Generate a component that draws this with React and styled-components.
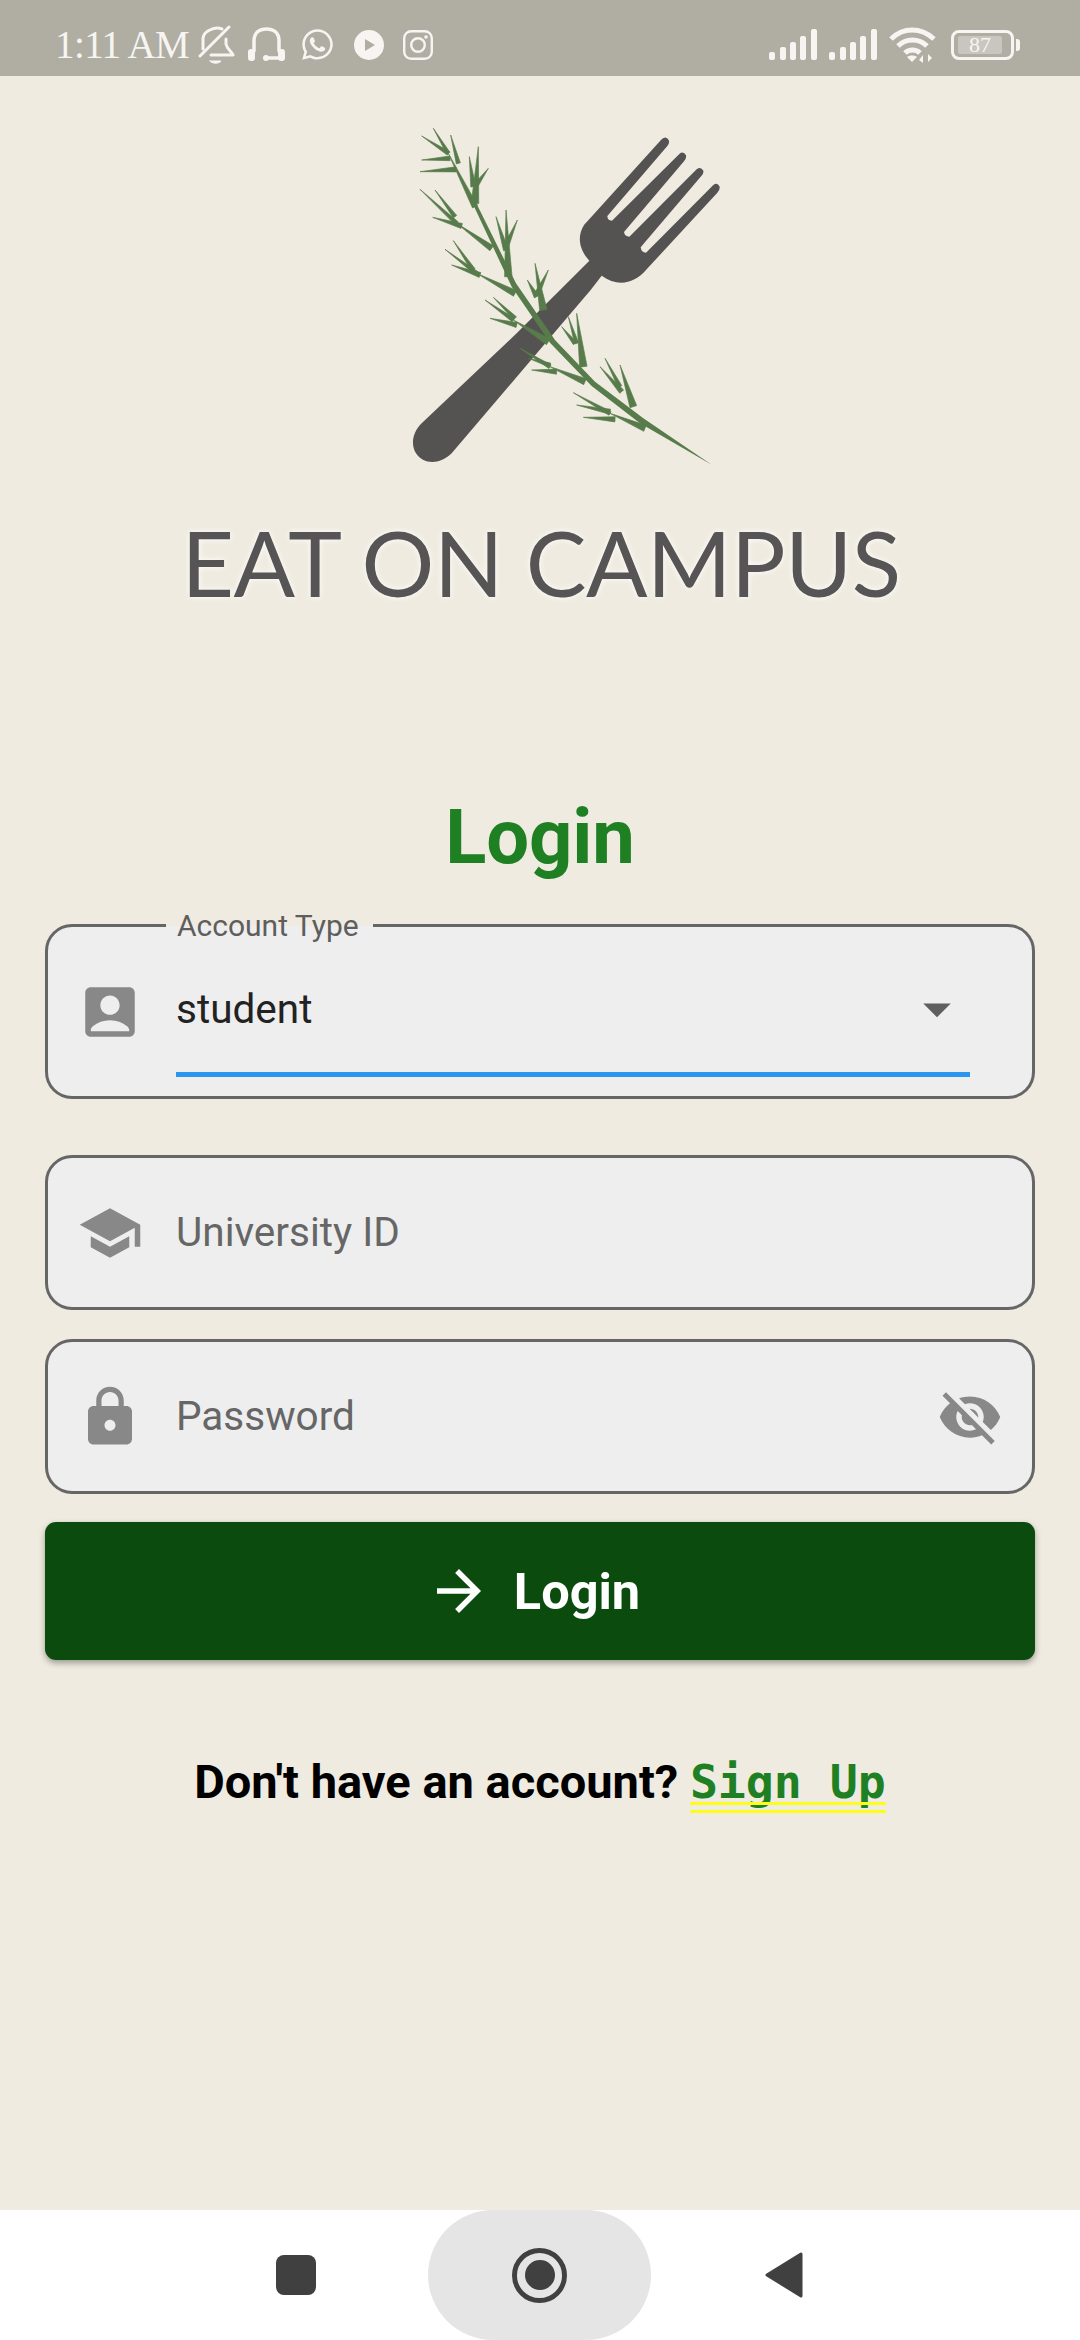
import React from "react";
import styled, { createGlobalStyle } from "styled-components";
import { MdAccountBox, MdSchool, MdLock, MdVisibilityOff, MdArrowForward, MdArrowDropDown } from "react-icons/md";
import { FaWhatsapp } from "react-icons/fa";

const Global = createGlobalStyle`
  html, body { margin: 0; padding: 0; background: #efebe0; }
  * { box-sizing: border-box; }
`;

const Page = styled.div`
  width: 1080px; height: 2340px; background: #efebe0; display: flex; flex-direction: column;
  overflow: hidden; font-family: Roboto, "Liberation Sans", sans-serif;
`;
const StatusBar = styled.div`
  height: 76px; flex: none; background: #b0ada3; display: flex; align-items: center; color: #f6f5f2;
  padding: 13px 0 0 55px;
`;
const Time = styled.span`
  font-family: "Liberation Serif", serif; font-size: 39px; letter-spacing: -0.6px; line-height: 1; width: 143px; white-space: nowrap;
`;
const StatusLeft = styled.div`display: flex; align-items: center; gap: 19px;`;
const StatusRight = styled.div`margin-left: auto; padding-right: 66px; display: flex; align-items: center; gap: 12px;`;
const BellIcon = styled.svg`margin-right: -6px;`;
const HeadsetIcon = styled.svg`margin-right: -4px;`;
const BatteryBox = styled.div`
  width: 63px; height: 30px; border: 3px solid #f6f5f2; border-radius: 8px; padding: 3px; margin-left: 3px; display: flex; position: relative;
  &::after { content: ""; position: absolute; right: -9px; top: 6px; width: 4px; height: 12px; background: #f6f5f2; border-radius: 0 3px 3px 0; }
`;
const BatteryFill = styled.div`
  width: 44px; height: 18px; background: #c8c6bf; border-radius: 2px; font-family: "Liberation Serif", serif; font-size: 22px; line-height: 18px; text-align: center; color: #f6f5f2; margin-left: 1px;
`;

const LogoMark = styled.svg`
  display: block; width: 360px; height: 370px; margin: 34px 0 0 380px; flex: none; filter: blur(0.7px);
`;
const Wordmark = styled.div`
  text-align: center; font-family: Lato, sans-serif; font-weight: 400; font-size: 91px; line-height: 100px; height: 100px;
  margin-top: 32px; padding-left: 2px; color: #565454; white-space: nowrap; letter-spacing: -0.5px; filter: blur(0.6px);
  text-shadow: 0 0 6px #fff;
`;
const Title = styled.h1`
  margin: 180px 0 0; text-align: center; font-size: 76px; line-height: 90px; font-weight: 700; color: #1f7f23; letter-spacing: -0.1px;
`;
const Form = styled.div`display: flex; flex-direction: column; padding: 0 45px; margin-top: 42px;`;
const Field = styled.div`
  height: ${p => p.$h}px; margin-top: ${p => p.$mt || 0}px; position: relative; background: #eeeeee; border: 3px solid #666;
  border-radius: 27px; display: flex; align-items: center; padding: 0 29px;
`;
const FloatLabel = styled.span`
  position: absolute; left: 118px; top: -16px; padding: 0 14px 0 11px; height: 30px; font-size: 30px; line-height: 30px; color: #5e5e5e;
  background: linear-gradient(#efebe0 50%, #eeeeee 50%); white-space: nowrap;
`;
const IconSlot = styled.span`
  width: 66px; height: 66px; flex: none; color: ${p => p.$c || "#888"}; display: flex;
  svg { width: 66px; height: 66px; display: block; }
`;
const SelectBody = styled.div`
  flex: 1; height: 131px; margin-left: 33px; margin-right: 33px; border-bottom: 5px solid #2b96ef; display: flex; align-items: center; justify-content: space-between;
`;
const Value = styled.span`font-size: 40.5px; line-height: 47px; color: #222;`;
const Placeholder = styled.span`flex: 1; margin-left: 33px; font-size: 40.5px; line-height: 47px; color: #666;`;
const SubmitButton = styled.button`
  height: 138px; margin-top: 28px; border: 0; border-radius: 11px; background: #0b4c0e; color: #fff; display: flex; align-items: center; justify-content: center;
  gap: 33px; font-family: inherit; font-size: 50.5px; font-weight: 700; box-shadow: 0 3px 6px rgba(0,0,0,.35); padding: 0 3px 0 0;
  svg { width: 66px; height: 66px; display: block; margin-right: -11px; margin-left: -11px; }
`;
const SignRow = styled.div`
  margin-top: 87px; text-align: center; font-size: 47px; line-height: 70px; font-weight: 700; color: #000; white-space: nowrap;
`;
const SignLink = styled.span`
  position: relative; display: inline-block; font-family: "DejaVu Sans Mono", monospace; color: #1f7f23; font-size: 46.5px; font-weight: 700;
  &::after { content: ""; position: absolute; left: 0; right: 0; top: 55px; height: 5px; border-top: 3px solid #fdfd1c; border-bottom: 3px solid #fdfd1c; }
`;
const NavBar = styled.div`
  margin-top: auto; height: 130px; flex: none; background: #fff; display: flex; align-items: center; padding-left: 276px; gap: 112px;
`;
const RecentKey = styled.div`width: 40px; height: 40px; border-radius: 8px; background: #404040;`;
const HomePill = styled.div`
  width: 223px; height: 130px; border-radius: 65px; background: #e5e5e5; display: flex; align-items: center; justify-content: center;
`;
const HomeRing = styled.div`
  width: 55px; height: 55px; border-radius: 50%; border: 5px solid #404040; display: flex; align-items: center; justify-content: center;
  &::after { content: ""; width: 30px; height: 30px; border-radius: 50%; background: #404040; }
`;
const BackKey = styled.svg`margin-left: 2px;`;

const Bell = () => (
  <BellIcon width="37" height="40" viewBox="0 0 37 40" fill="none" stroke="#f6f5f2" strokeWidth="3" strokeLinecap="round" strokeLinejoin="round">
    <path d="M5 24 V13 C6 6 17 1 24 4" />
    <path d="M2 31 L31 2" />
    <path d="M28 14 V19 C29 24 33 26 35 30 H13" />
    <path d="M12 36 H23 C21 39 14 39 12 36 Z" fill="#f6f5f2" strokeWidth="1" />
  </BellIcon>
);
const Headset = () => (
  <HeadsetIcon width="37" height="36" viewBox="0 0 37 36" fill="none" stroke="#f6f5f2" strokeWidth="3.5" strokeLinecap="round">
    <path d="M6 24 V14 C6 5 12 2 18.5 2 C25 2 31 5 31 14 V24" />
    <rect x="1" y="23" width="5" height="10" rx="2" fill="#f6f5f2" strokeWidth="2" />
    <rect x="31" y="23" width="5" height="10" rx="2" fill="#f6f5f2" strokeWidth="2" />
    <path d="M18 31 H30" />
    <circle cx="18" cy="31" r="3" fill="#f6f5f2" stroke="none" />
  </HeadsetIcon>
);
const Play = () => (
  <svg width="30" height="30" viewBox="0 0 30 30">
    <path fillRule="evenodd" fill="#f6f5f2" d="M15 0a15 15 0 1 0 0 30a15 15 0 1 0 0-30z M11 9 L21 15 L11 21 Z" />
  </svg>
);
const Insta = () => (
  <svg width="30" height="30" viewBox="0 0 30 30" fill="none" stroke="#f6f5f2" strokeWidth="2.4">
    <rect x="1.2" y="1.2" width="27.6" height="27.6" rx="7" />
    <circle cx="15" cy="15" r="6.8" />
    <circle cx="23" cy="7" r="1.8" fill="#f6f5f2" stroke="none" />
  </svg>
);
const Signal = () => (
  <svg width="48" height="31" viewBox="0 0 48 31" fill="#f6f5f2">
    <rect x="0" y="23" width="6" height="8" rx="2" />
    <rect x="11" y="18" width="6" height="13" rx="2" />
    <rect x="21" y="13" width="6" height="18" rx="2" />
    <rect x="31" y="7" width="6" height="24" rx="2" />
    <rect x="42" y="0" width="6" height="31" rx="2" />
  </svg>
);
const Wifi = () => (
  <svg width="47" height="36" viewBox="0 0 47 36" fill="none" stroke="#f6f5f2" strokeWidth="5">
    <path d="M2 12 C14 0 32 0 45 12" />
    <path d="M9 19 C17 11 30 11 38 19" />
    <path d="M16 26 C20 22 27 22 31 26" />
    <path d="M23 35 L18 30 C20 28 26 28 28 30 Z" fill="#f6f5f2" stroke="none" />
    <path d="M34 36 V28 L30 33 Z M39 27 V35 L43 31 Z" fill="#f6f5f2" stroke="none" />
  </svg>
);

const leaves = [
  [[285,290],[205,130],12],[[205,130],[160,55],8],[[205,130],[125,78],9],[[210,145],[125,150],10],[[228,178],[120,185],11],[[235,160],[212,75],9],
  [[285,280],[295,110],16],[[280,230],[268,140],11],[[285,230],[325,175],11],
  [[335,415],[230,340],13],[[230,340],[120,238],9],[[225,320],[165,240],9],[[245,348],[158,322],11],
  [[385,500],[378,300],16],[[378,420],[348,320],11],[[378,410],[412,330],11],
  [[405,550],[290,490],14],[[290,490],[195,418],9],[[280,480],[220,392],9],[[300,495],[215,465],11],
  [[490,600],[465,460],16],[[470,560],[442,510],11],[[472,550],[505,480],11],
  [[505,695],[400,630],15],[[400,630],[315,570],9],[[405,625],[340,562],9],[[410,645],[330,625],11],
  [[610,770],[590,610],16],[[590,700],[565,620],9],[[585,700],[545,650],9],
  [[615,815],[510,770],14],[[510,770],[420,715],9],[[510,765],[445,745],9],[[530,785],[455,780],11],
  [[760,890],[720,765],15],[[725,845],[660,770],11],[[720,830],[675,745],9],
  [[795,955],[690,910],14],[[690,910],[580,848],9],[[690,905],[590,885],11],[[705,928],[610,922],11],
];
const leafPath = ([a, b, w0]) => {
  const w = w0 * 1.4, dx = b[0] - a[0], dy = b[1] - a[1], l = Math.hypot(dx, dy), nx = -dy / l * w / 2, ny = dx / l * w / 2;
  return `M${a[0] + nx} ${a[1] + ny}L${b[0]} ${b[1]}L${a[0] - nx} ${a[1] - ny}Z`;
};

const Logo = () => (
  <LogoMark viewBox="0 0 1080 1110">
    <path fill="#555252" d="M628 452 C598 420 590 380 612 345 L845 88 Q858 76 866 90 Q870 98 862 108 L682 318 Q682 332 696 332 L898 132 Q910 122 918 136 Q920 145 912 154 L732 366 Q734 380 748 380 L950 178 Q962 168 970 182 Q972 190 964 198 L782 412 Q784 428 798 428 L1000 225 Q1012 215 1019 230 Q1020 240 1012 248 L800 478 C760 525 710 530 665 497 L632 540 L445 760 L215 1030 C180 1065 130 1065 108 1030 C90 1000 100 965 125 940 L410 670 Z" />
    <path fill="#587b4b" d="M280 285 L290 282 L408 520 L525 690 L645 815 L790 925 L995 1064 L780 940 L635 828 L510 698 L395 530 Z" />
    {leaves.map((leaf, i) => <path key={i} fill="#587b4b" stroke="#587b4b" strokeWidth="2" strokeLinejoin="round" d={leafPath(leaf)} />)}
  </LogoMark>
);

export default function App() {
  return (
    <Page>
      <Global />
      <StatusBar>
        <Time>1:11 AM</Time>
        <StatusLeft>
          <Bell />
          <Headset />
          <FaWhatsapp size={35} color="#f6f5f2" />
          <Play />
          <Insta />
        </StatusLeft>
        <StatusRight>
          <Signal />
          <Signal />
          <Wifi />
          <BatteryBox><BatteryFill>87</BatteryFill></BatteryBox>
        </StatusRight>
      </StatusBar>
      <Logo />
      <Wordmark>EAT ON CAMPUS</Wordmark>
      <Title>Login</Title>
      <Form>
        <Field $h={175}>
          <FloatLabel>Account Type</FloatLabel>
          <IconSlot><MdAccountBox /></IconSlot>
          <SelectBody>
            <Value>student</Value>
            <IconSlot $c="#5f5f5f"><MdArrowDropDown /></IconSlot>
          </SelectBody>
        </Field>
        <Field $h={155} $mt={56}>
          <IconSlot><MdSchool /></IconSlot>
          <Placeholder>University ID</Placeholder>
        </Field>
        <Field $h={155} $mt={29}>
          <IconSlot><MdLock /></IconSlot>
          <Placeholder>Password</Placeholder>
          <IconSlot><MdVisibilityOff /></IconSlot>
        </Field>
        <SubmitButton><MdArrowForward />Login</SubmitButton>
      </Form>
      <SignRow>Don't have an account? <SignLink>Sign Up</SignLink></SignRow>
      <NavBar>
        <RecentKey />
        <HomePill><HomeRing /></HomePill>
        <BackKey width="38" height="46" viewBox="0 0 38 46"><path fill="#404040" stroke="#404040" strokeWidth="3" strokeLinejoin="round" d="M36 2 V44 L2 23 Z" /></BackKey>
      </NavBar>
    </Page>
  );
}
